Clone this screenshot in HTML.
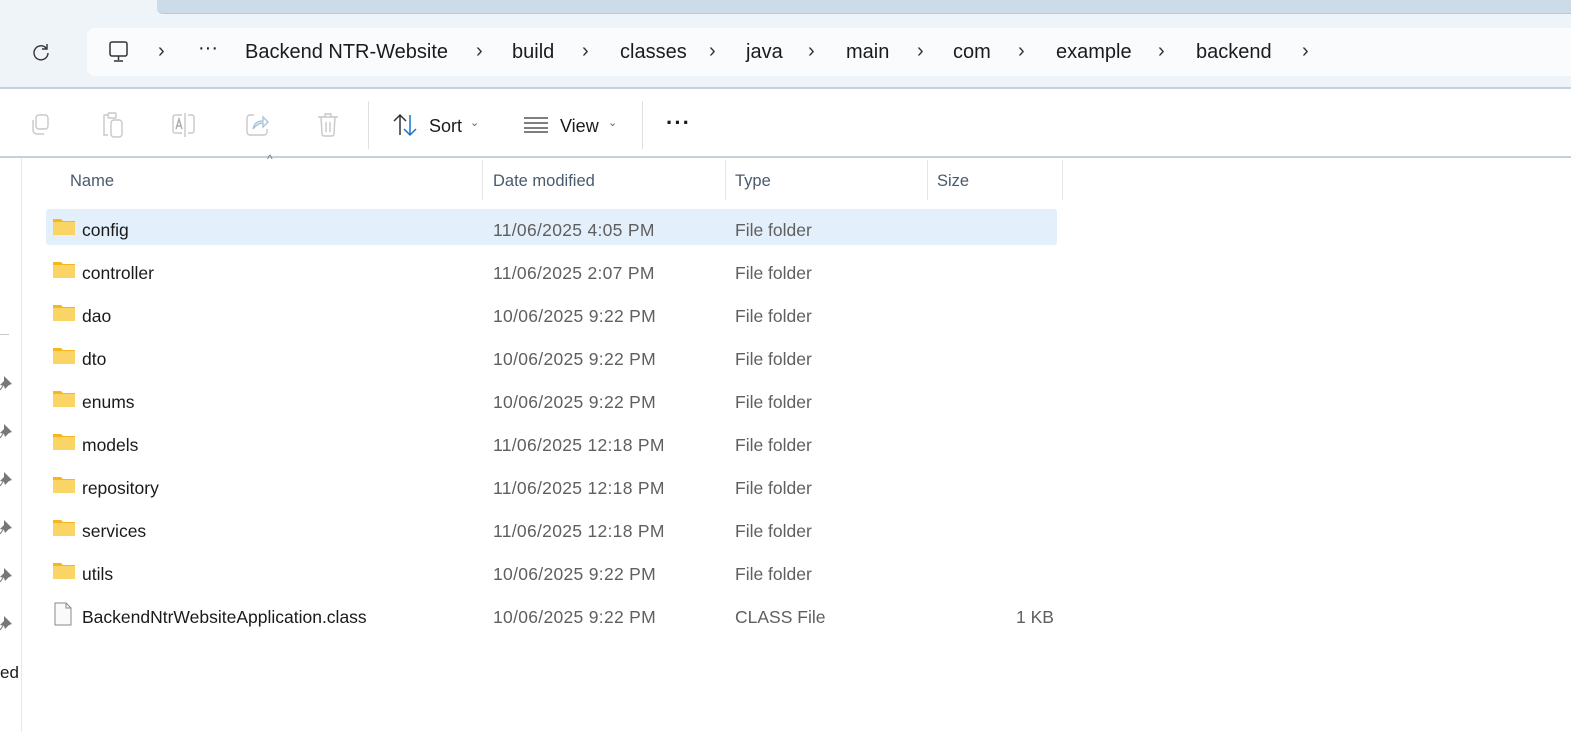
<!DOCTYPE html>
<html><head><style>
*{margin:0;padding:0;box-sizing:border-box}
body{width:1571px;height:732px;overflow:hidden;background:#fff;font-family:"Liberation Sans",sans-serif;position:relative;color:#1a1a1a}
.abs{position:absolute}
.t{position:absolute;white-space:nowrap}
.crumb{font-size:20px;top:41px;color:#1b1b1b}
.chev{font-size:20px;top:40px;color:#333}
.hdr{font-size:16.5px;color:#4a5a6e;top:172px}
.d{color:#5f5f5f}
</style></head><body>
<div class="abs" style="left:0;top:0;width:1571px;height:88px;background:#eff4f9"></div>
<div class="abs" style="left:157px;top:0;width:1414px;height:14px;background:#cbdbe8;border-bottom-left-radius:6px;border-bottom:1px solid #b9cad8"></div>
<div class="abs" style="left:87px;top:28px;width:1484px;height:48px;background:#f9fbfd;border-radius:8px 0 0 8px"></div>
<div class="abs" style="left:0;top:87px;width:1571px;height:2px;background:#c4d1dc"></div>
<div class="abs" style="left:0;top:156px;width:1571px;height:2px;background:#c4d1dc"></div>
<svg class="abs" style="left:31px;top:42px" width="20" height="20" viewBox="0 0 20 20"><path d="M15.5 6.5A7 7 0 1 0 17 11" fill="none" stroke="#333" stroke-width="1.4"/><path d="M16 2v5h-5" fill="none" stroke="#333" stroke-width="1.4"/></svg>
<svg class="abs" style="left:107px;top:40px" width="24" height="24" viewBox="0 0 24 24"><rect x="3" y="2" width="17" height="14" rx="2" fill="none" stroke="#333" stroke-width="1.5"/><path d="M11.5 16v4M7 21h9" stroke="#333" stroke-width="1.5"/></svg>
<span class="t chev" style="left:158px">›</span>
<span class="t crumb" style="left:198px;top:37px">···</span>
<span class="t crumb" style="left:245px">Backend NTR-Website</span>
<span class="t chev" style="left:476px">›</span>
<span class="t crumb" style="left:512px">build</span>
<span class="t chev" style="left:582px">›</span>
<span class="t crumb" style="left:620px">classes</span>
<span class="t chev" style="left:709px">›</span>
<span class="t crumb" style="left:746px">java</span>
<span class="t chev" style="left:808px">›</span>
<span class="t crumb" style="left:846px">main</span>
<span class="t chev" style="left:917px">›</span>
<span class="t crumb" style="left:953px">com</span>
<span class="t chev" style="left:1018px">›</span>
<span class="t crumb" style="left:1056px">example</span>
<span class="t chev" style="left:1158px">›</span>
<span class="t crumb" style="left:1196px">backend</span>
<span class="t chev" style="left:1302px">›</span>
<svg class="abs" style="left:28px;top:112px" width="26" height="26" viewBox="0 0 26 26" fill="none" stroke="#c8c8c8" stroke-width="1.4"><rect x="8" y="3" width="12" height="14" rx="3"/><path d="M5 8v10a4 4 0 0 0 4 4h7"/></svg>
<svg class="abs" style="left:100px;top:111px" width="26" height="28" viewBox="0 0 26 28" fill="none" stroke="#c8c8c8" stroke-width="1.4"><path d="M8 4H4v20h4"/><rect x="8" y="2" width="8" height="5" rx="1"/><rect x="11" y="9" width="11" height="17" rx="3"/></svg>
<svg class="abs" style="left:170px;top:112px" width="28" height="26" viewBox="0 0 28 26" fill="none" stroke="#c8c8c8" stroke-width="1.4"><path d="M12 3H5a2 2 0 0 0-2 2v14a2 2 0 0 0 2 2h7M18 3h4a2 2 0 0 1 2 2v14a2 2 0 0 1-2 2h-4M15 1v24"/><path d="M6 17l3-10 3 10M7 14h4" stroke="#aaa"/></svg>
<svg class="abs" style="left:244px;top:112px" width="26" height="26" viewBox="0 0 26 26" fill="none" stroke="#c8c8c8" stroke-width="1.4"><path d="M10 3H6a3 3 0 0 0-3 3v14a3 3 0 0 0 3 3h14a3 3 0 0 0 3-3v-3"/><path d="M9 17c1-6 5-8 10-8V5l5 5-5 5v-4c-4 0-7 2-10 6z" stroke="#a9c4dc"/></svg>
<svg class="abs" style="left:316px;top:112px" width="24" height="26" viewBox="0 0 24 26" fill="none" stroke="#c8c8c8" stroke-width="1.4"><path d="M2 5h20M9 5V2h6v3M5 5l1 17a2 2 0 0 0 2 2h8a2 2 0 0 0 2-2l1-17M10 10v10M14 10v10"/></svg>
<div class="abs" style="left:368px;top:101px;width:1px;height:48px;background:#e0e0e0"></div>
<svg class="abs" style="left:392px;top:113px" width="26" height="24" viewBox="0 0 26 24" fill="none" stroke-width="1.5"><path d="M8 22V2M2 8l6-6 6 6" stroke="#333"/><path d="M18 2v20M12 16l6 6 6-6" stroke="#1a73c8"/></svg>
<span class="t" style="left:429px;top:116px;font-size:18px">Sort</span>
<span class="t" style="left:470px;top:116px;font-size:11px;color:#666">⌄</span>
<svg class="abs" style="left:523px;top:116px" width="26" height="18" viewBox="0 0 26 18" stroke="#333" stroke-width="1.3"><path d="M1 2h24M1 7h24M1 12h24M1 16h24"/></svg>
<span class="t" style="left:560px;top:116px;font-size:18px">View</span>
<span class="t" style="left:608px;top:116px;font-size:11px;color:#666">⌄</span>
<div class="abs" style="left:642px;top:101px;width:1px;height:48px;background:#e0e0e0"></div>
<span class="t" style="left:666px;top:110px;font-size:22px;font-weight:bold;letter-spacing:1px">···</span>
<div class="abs" style="left:21px;top:158px;width:1px;height:574px;background:#e8e8e8"></div>
<div class="abs" style="left:0;top:334px;width:9px;height:1px;background:#c8c8c8"></div>
<span class="t" style="left:0;top:663px;font-size:17px">ed</span>
<span class="t" style="left:267px;top:152px;font-size:12px;color:#777">^</span>
<span class="t hdr" style="left:70px">Name</span>
<div class="abs" style="left:482px;top:160px;width:1px;height:40px;background:#e5e5e5"></div>
<span class="t hdr" style="left:493px">Date modified</span>
<div class="abs" style="left:725px;top:160px;width:1px;height:40px;background:#e5e5e5"></div>
<span class="t hdr" style="left:735px">Type</span>
<div class="abs" style="left:927px;top:160px;width:1px;height:40px;background:#e5e5e5"></div>
<span class="t hdr" style="left:937px">Size</span>
<div class="abs" style="left:1062px;top:160px;width:1px;height:40px;background:#e5e5e5"></div>
<div class="abs" style="left:46px;top:209px;width:1011px;height:36px;background:#e3f0fb;border-radius:3px"></div>
<div id="rows"></div>
<script>
var r=[["config","11/06/2025 4:05 PM"],["controller","11/06/2025 2:07 PM"],["dao","10/06/2025 9:22 PM"],["dto","10/06/2025 9:22 PM"],["enums","10/06/2025 9:22 PM"],["models","11/06/2025 12:18 PM"],["repository","11/06/2025 12:18 PM"],["services","11/06/2025 12:18 PM"],["utils","10/06/2025 9:22 PM"],["BackendNtrWebsiteApplication.class","10/06/2025 9:22 PM"]];
var h="";var st="font-size:17.5px;";
r.forEach(function(x,i){var y=220+i*43;var f=i==9;
h+=f?'<svg class="abs" style="left:53px;top:'+(y-5)+'px" width="20" height="24" viewBox="0 0 20 24"><path d="M2 1h11l5 5v17H2z" fill="#fafafa" stroke="#8a8a8a"/><path d="M13 1v5h5" fill="none" stroke="#8a8a8a"/></svg>'
:'<svg class="abs" style="left:53px;top:'+(y-2)+'px" width="23" height="18" viewBox="0 0 23 18"><path d="M0 1h8l2 2h12v14H0z" fill="#f5b81c"/><rect x="0" y="4" width="22" height="13" fill="#fbd466"/></svg>';
h+='<span class="t" style="left:82px;top:'+y+'px;'+st+'">'+x[0]+'</span>';
h+='<span class="t d" style="left:493px;top:'+y+'px;'+st+'letter-spacing:0.3px">'+x[1]+'</span>';
h+='<span class="t d" style="left:735px;top:'+y+'px;'+st+'">'+(f?'CLASS File':'File folder')+'</span>';
if(f)h+='<span class="t d" style="left:1016px;top:'+y+'px;'+st+'">1 KB</span>';
if(i>=2&&i<=7)h+='<svg class="abs" style="left:0;top:'+(374+(i-2)*48)+'px" width="14" height="18" viewBox="0 0 14 18"><path d="M4 2l8 8-3 1-4 4-1-3-4-1 4-4z" fill="#777"/><path d="M3 12l-3 4" stroke="#777"/></svg>';
});
document.getElementById("rows").outerHTML=h;
</script>
</body></html>
